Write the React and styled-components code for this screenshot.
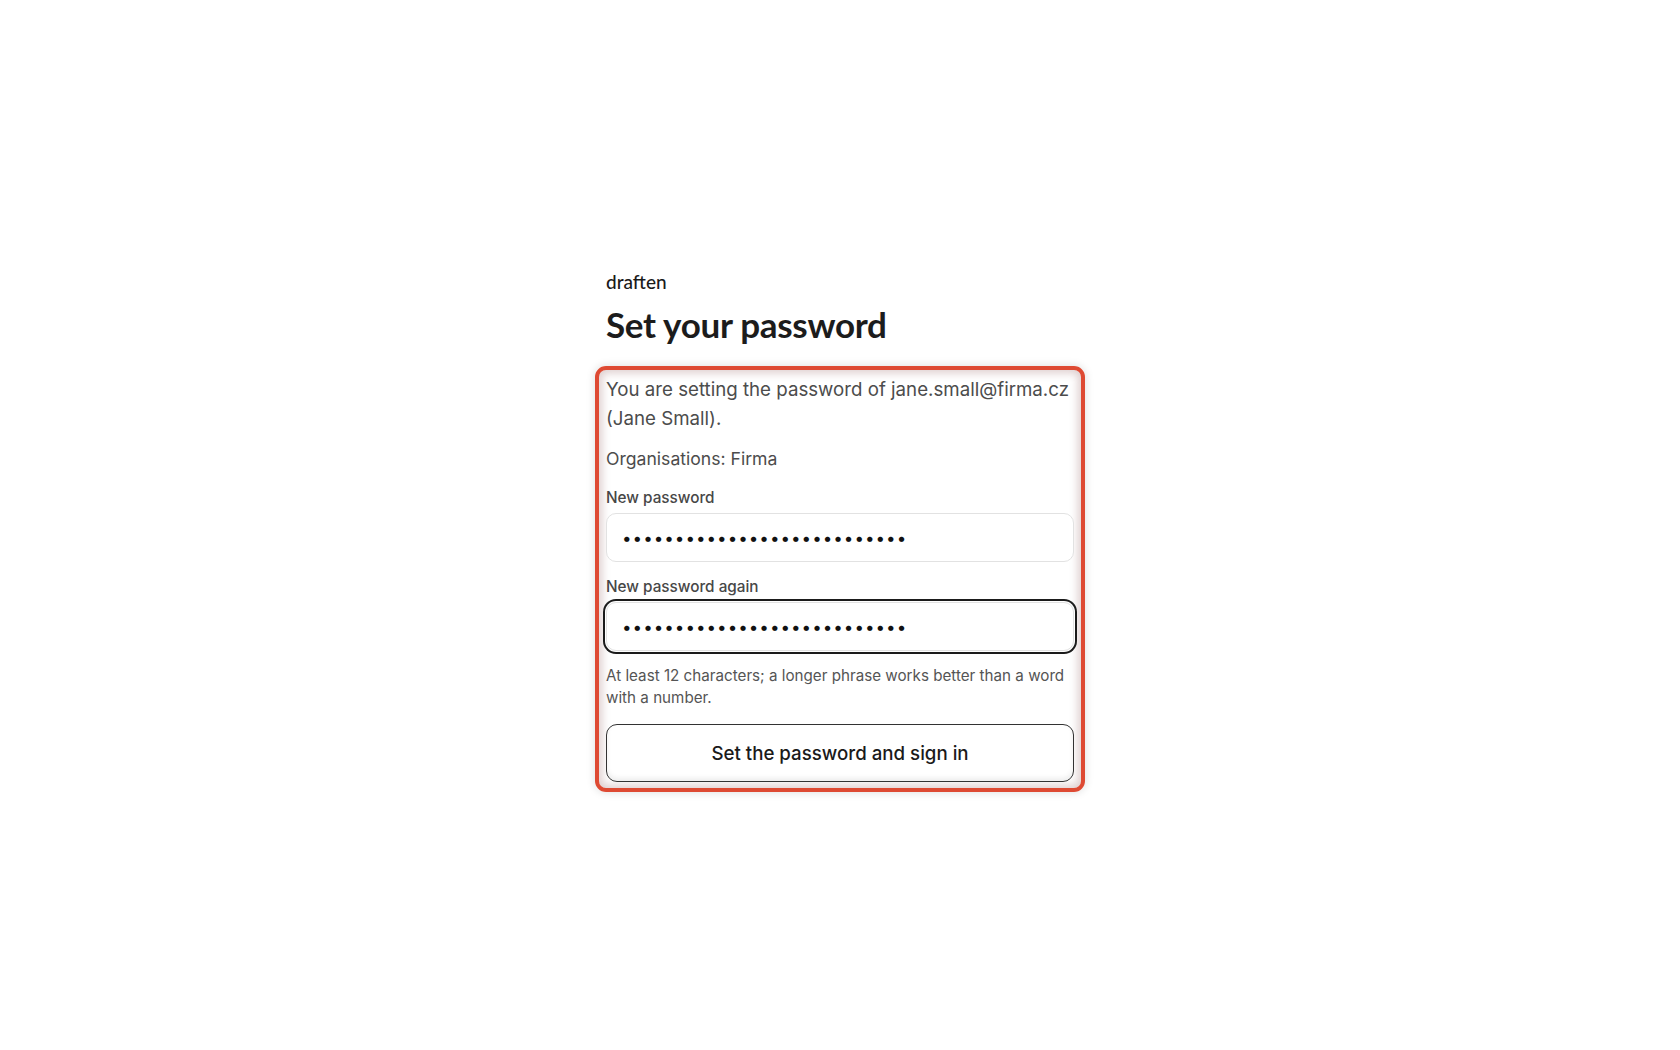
import { createGlobalStyle } from 'styled-components';
import styled from 'styled-components';

const GlobalStyle = createGlobalStyle`
  html, body {
    margin: 0;
    padding: 0;
    background: #ffffff;
  }
  body {
    font-family: Inter, "Liberation Sans", sans-serif;
    color: #1a1a1a;
  }
`

const Page = styled.main`
  min-height: 100vh;
  box-sizing: border-box;
  padding-top: 270px;
  display: flex;
  justify-content: center;
`

const Column = styled.div`
  width: 468px;
  display: flex;
  flex-direction: column;
`

const Brand = styled.div`
  font-family: Lato, Inter, sans-serif;
  font-size: 19px;
  line-height: 24px;
  font-weight: 500;
  color: #1a1a1a;
`

const Title = styled.h1`
  margin: 9px 0 21px;
  font-family: Lato, Inter, sans-serif;
  font-size: 35px;
  line-height: 42px;
  font-weight: 700;
  letter-spacing: -0.3px;
  color: #1c1c1c;
`

// the reviewed form, marked with the red frame
const Form = styled.form`
  margin: 0 -11px;
  padding: 5px 7px 6px;
  border: 4px solid #de4a33;
  border-radius: 11px;
  box-shadow: inset 0 0 8px 3px rgba(150, 100, 100, 0.32), 0 0 10px rgba(0, 0, 0, 0.14);
  display: flex;
  flex-direction: column;
`

const Text = styled.p`
  margin: 0 0 ${p => p.gap || 0}px;
  font-size: ${p => p.size || 18}px;
  line-height: ${p => p.lh || 28}px;
  color: #4c4c4c;
`

const Label = styled.label`
  display: block;
  font-size: 15.3px;
  line-height: 20px;
  font-weight: 500;
  color: #474747;
  margin-bottom: 5px;
`

const Input = styled.input`
  box-sizing: border-box;
  width: 100%;
  height: 49px;
  padding: 0 15px;
  border: 1px solid #e2e2e2;
  border-radius: 10px;
  background: #fff;
  font-family: Inter, sans-serif;
  font-size: 17px;
  letter-spacing: 1px;
  color: #111;
  outline: none;
  box-shadow: ${p => p.focused ? '0 0 0 1px #fff, 0 0 0 3px #1b1b1b' : 'none'};
`

const Field = styled.div`
  margin-bottom: ${p => p.gap || 0}px;
`

const Hint = styled.p`
  margin: 0 0 15px;
  font-size: 15.2px;
  line-height: 22px;
  color: #555;
`

const Button = styled.button`
  box-sizing: border-box;
  width: 100%;
  height: 58px;
  border: 1.5px solid #333;
  border-radius: 11px;
  background: #fff;
  font-family: Inter, sans-serif;
  font-size: 18.7px;
  font-weight: 500;
  color: #1a1a1a;
  box-shadow: inset 0 -3px 5px rgba(0, 0, 0, 0.07);
  cursor: pointer;
`

function App() {
  const secret = 'x'.repeat(27)

  return (
    <Page>
      <GlobalStyle />
      <Column>
        <Brand>draften</Brand>
        <Title>Set your password</Title>
        <Form onSubmit={e => e.preventDefault()}>
          <Text size={18.7} lh={29} gap={12}>You are setting the password of jane.small@firma.cz (Jane Small).</Text>
          <Text size={17.6} gap={15}>Organisations: Firma</Text>
          <Field gap={15}>
            <Label>New password</Label>
            <Input type='password' defaultValue={secret} readOnly />
          </Field>
          <Field gap={14}>
            <Label>New password again</Label>
            <Input type='password' defaultValue={secret} readOnly focused />
          </Field>
          <Hint>At least 12 characters; a longer phrase works better than a word with a number.</Hint>
          <Button type='submit'>Set the password and sign in</Button>
        </Form>
      </Column>
    </Page>
  );
}

export default App;
